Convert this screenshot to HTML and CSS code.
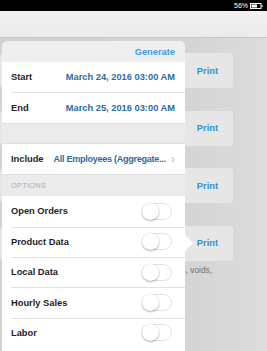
FILE: index.html
```html
<!DOCTYPE html>
<html>
<head>
<meta charset="utf-8">
<link rel="stylesheet" href="styles.css">
</head>
<body>
<div class="status">
  <span class="pct">56%</span>
  <svg class="battery" width="13" height="6" viewBox="0 0 13 6"><rect x="0.5" y="0.5" width="10.5" height="5" fill="none" stroke="#fff" stroke-width="1"/><rect x="1.5" y="1.5" width="5.5" height="3" fill="#fff"/><rect x="11.5" y="2" width="1" height="2" fill="#fff"/></svg>
</div>
<div class="navbar"></div>
<div class="content">
  <div class="cards">
    <div class="card"><span class="print">Print</span></div>
    <div class="card"><span class="print">Print</span></div>
    <div class="card"><span class="print">Print</span></div>
    <div class="card"><span class="print">Print</span></div>
  </div>
  <div class="desc">Includes discounts, comps, voids,</div>

  <div class="popover">
    <div class="pop-head"><span class="generate">Generate</span></div>
    <div class="row"><span class="label">Start</span><span class="value">March 24, 2016 03:00 AM</span></div>
    <div class="row"><span class="label">End</span><span class="value">March 25, 2016 03:00 AM</span></div>
    <div class="spacer"></div>
    <div class="row include"><span class="label">Include</span><span class="value inc">All Employees (Aggregate...</span><span class="chev">&#x203A;</span></div>
    <div class="section">OPTIONS</div>
    <div class="row"><span class="label">Open Orders</span><span class="toggle"><span class="knob"></span></span></div>
    <div class="row"><span class="label">Product Data</span><span class="toggle"><span class="knob"></span></span></div>
    <div class="row"><span class="label">Local Data</span><span class="toggle"><span class="knob"></span></span></div>
    <div class="row"><span class="label">Hourly Sales</span><span class="toggle"><span class="knob"></span></span></div>
    <div class="row"><span class="label">Labor</span><span class="toggle"><span class="knob"></span></span></div>
    <div class="arrow"></div>
  </div>
</div>
</body>
</html>
```
FILE: styles.css
```css
html, body {
  margin: 0;
  padding: 0;
}
body {
  width: 267px;
  height: 351px;
  overflow: hidden;
  font-family: "Liberation Sans", Arial, sans-serif;
  background: linear-gradient(90deg, #d2d2d2 0%, #d4d4d4 70%, #dcdcdc 100%);
}
.status {
  height: 11px;
  background: #000;
  display: flex;
  justify-content: flex-end;
  align-items: center;
  gap: 2px;
  padding-right: 4px;
}
.pct {
  color: #fff;
  font-size: 7px;
  line-height: 7px;
}
.battery {
  display: block;
}
.navbar {
  height: 26px;
  background: linear-gradient(#f1f1f1, #ebebeb);
  border-bottom: 1px solid #c6c6c6;
}
.content {
  position: relative;
  height: 313px;
}
.cards {
  display: flex;
  flex-direction: column;
  gap: 22.5px;
  padding-top: 15px;
  width: 233px;
}
.card {
  height: 35px;
  background: #e6e6e6;
  border-radius: 4px;
  display: flex;
  align-items: center;
  justify-content: flex-end;
  padding-right: 15px;
}
.print {
  color: #2f8fca;
  font-weight: bold;
  font-size: 9.3px;
}
.desc {
  margin-top: 4px;
  text-align: right;
  padding-right: 55px;
  color: #6e6e6e;
  font-size: 8.3px;
}
.popover {
  position: absolute;
  left: 2px;
  top: 3px;
  width: 183px;
  height: 320px;
  background: #fff;
  border-radius: 6px 6px 0 0;
  display: flex;
  flex-direction: column;
}
.pop-head {
  height: 21px;
  background: #efefef;
  border-radius: 6px 6px 0 0;
  display: flex;
  align-items: center;
  justify-content: flex-end;
  padding-right: 10px;
  flex: none;
}
.generate {
  color: #3a9de0;
  font-size: 9.3px;
  font-weight: bold;
}
.row {
  height: 30.4px;
  flex: none;
  display: flex;
  align-items: center;
  justify-content: space-between;
  padding: 0 10px 0 9px;
  position: relative;
  box-sizing: border-box;
  white-space: nowrap;
}
.row + .row::before {
  content: "";
  position: absolute;
  left: 9px;
  right: 0;
  top: 0;
  height: 1px;
  background: #e2e2e2;
}
.label {
  font-size: 9.3px;
  font-weight: bold;
  color: #1e1e1e;
}
.value {
  font-size: 9.3px;
  font-weight: bold;
  color: #2e6b9e;
}
.include {
  justify-content: flex-start;
}
.inc {
  margin-left: 10px;
  flex: none;
  font-size: 9.1px;
  letter-spacing: -0.3px;
}
.chev {
  margin-left: auto;
  color: #c4c4c8;
  font-size: 13px;
  line-height: 10px;
}
.spacer {
  height: 21px;
  flex: none;
  background: #ebebeb;
  box-sizing: border-box;
  border-top: 1px solid #dedede;
  border-bottom: 1px solid #dedede;
}
.section {
  height: 22px;
  flex: none;
  background: #ebebeb;
  color: #adadad;
  font-size: 7.5px;
  display: flex;
  align-items: center;
  padding-left: 9px;
  box-sizing: border-box;
  border-top: 1px solid #dedede;
  letter-spacing: 0.2px;
}
.toggle {
  width: 30px;
  height: 17px;
  box-sizing: border-box;
  border: 1px solid #e2e2e2;
  border-radius: 9px;
  position: relative;
  margin-right: 3px;
  background: #fff;
}
.knob {
  position: absolute;
  left: -1px;
  top: -1px;
  width: 17px;
  height: 17px;
  border-radius: 50%;
  background: #fff;
  box-shadow: 0 1px 2px rgba(0,0,0,0.3), 0 0 0 0.5px rgba(0,0,0,0.08);
}
.arrow {
  position: absolute;
  right: -8px;
  top: 194px;
  width: 0;
  height: 0;
  border-top: 8px solid transparent;
  border-bottom: 8px solid transparent;
  border-left: 8px solid #fff;
}
```
